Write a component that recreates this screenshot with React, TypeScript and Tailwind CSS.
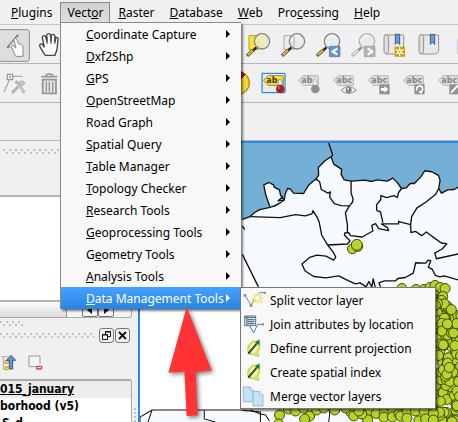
import React from "react";

/* Renders a label with its mnemonic letter (marked by "&") underlined. */
function Mnemonic({ text }: { text: string }) {
  const i = text.indexOf("&");
  if (i < 0) return <span>{text}</span>;
  return (
    <span>
      {text.slice(0, i)}
      <span className="underline decoration-1 underline-offset-1">{text[i + 1]}</span>
      {text.slice(i + 2)}
    </span>
  );
}

const MENUS = ["&Plugins", "Vect&or", "&Raster", "&Database", "&Web", "Pro&cessing", "&Help"];

function MenuBar() {
  return (
    <nav className="flex h-[25px] shrink-0 items-start gap-px border-b border-[#c4c4c4] bg-[#f0f0f0] pt-[2px] pl-[4px]" aria-label="Main menu">
      {MENUS.map((m) => (
        <button
          key={m}
          type="button"
          className={
            m === "Vect&or"
              ? "flex h-[21px] items-center whitespace-nowrap border border-[#8a8a8a] bg-linear-to-b from-[#d2d2d2] to-[#dedede] px-[6px]"
              : "flex h-[21px] items-center whitespace-nowrap border border-transparent px-[6px]"
          }
        >
          <Mnemonic text={m} />
        </button>
      ))}
    </nav>
  );
}

function ToolButton({ label, viewBox, className = "", children }: { label: string; viewBox: string; className?: string; children: React.ReactNode }) {
  return (
    <button type="button" aria-label={label} className={`size-[35px] shrink-0 ${className}`}>
      <svg viewBox={viewBox} className="size-full overflow-visible" fill="none">
        {children}
      </svg>
    </button>
  );
}

function Magnifier({ handle = "#f0b030", dim = false }: { handle?: string; dim?: boolean }) {
  return (
    <g>
      <path d="M26 164 L45 147" stroke={dim ? "#a8a8a8" : "#4c4c4c"} strokeWidth="10" />
      <path d="M28 162 L45 147" stroke={handle} strokeWidth="6" />
      <path d="M45 148 L54 139" stroke={dim ? "#909090" : "#222"} strokeWidth="7" />
      <circle cx="71" cy="121" r="23" fill="#e8e8e8" fillOpacity=".7" stroke={dim ? "#b4b4b4" : "#858585"} strokeWidth="4" />
      <path d="M54 120 Q58 103 75 104" stroke="#fff" strokeWidth="3" />
    </g>
  );
}

function Scroll() {
  return (
    <g>
      <path d="M22 102 h54 v49 q-5 8-10 8 H24 z" fill="#e9e9e9" stroke="#929292" strokeWidth="3" />
      <path d="M20 101 q-4 5-3 14 v37 q2 9 9 6 q6-3 5-10 V110 q-1-10-11-9z" fill="#ddd" stroke="#929292" strokeWidth="3" />
      <path d="M51 100 h13 v30 l-7-6-6 6z" fill="#719cca" stroke="#315f91" strokeWidth="3" />
    </g>
  );
}

function Tag({ text, active = false }: { text: string; active?: boolean }) {
  return (
    <g>
      <path d="M5 241 L20 227 H62 Q65 227 65 230 V256 H20z" fill={active ? "#f7df3c" : "#dedede"} stroke={active ? "#a28b2b" : "#b6b6b6"} strokeWidth="3" />
      <text x="14" y="249" className="font-['DejaVu_Sans',sans-serif] font-bold" fontSize="24" fill={active ? "#3d3927" : "#868686"}>
        {text}
      </text>
    </g>
  );
}

function NavigationBar() {
  return (
    <div className="flex h-[39px] shrink-0 items-center overflow-hidden border-b border-[#b5b5b5]" role="toolbar" aria-label="Map navigation">
      <ToolButton label="Touch zoom and pan" viewBox="-12 78 105 105" className="-ml-[4px]">
        <rect x="-9" y="86" width="97" height="95" rx="7" fill="#dedede" stroke="#8c8c8c" strokeWidth="3" />
        <path d="M22 139 L54 101 M20 139 l9-1 M53 109 v-9" stroke="#777" strokeWidth="4" />
        <path d="M37 144 Q31 134 39 133 L48 141 L42 117 Q42 109 49 113 L56 129 Q66 127 69 139 L69 166 H47z" fill="#fff" stroke="#8a8a8a" strokeWidth="3" />
      </ToolButton>
      <ToolButton label="Pan map" viewBox="93 78 105 105">
        <path d="M130 155 L119 135 Q119 126 127 130 L133 139 L127 110 Q128 101 136 105 L141 122 L140 102 Q145 94 151 101 L153 120 L154 102 Q161 97 165 105 V123 L168 109 Q175 108 174 116 L171 145 L165 163 H136z" fill="#fff" stroke="#444" strokeWidth="4" />
        <path d="M141 108 V128 M153 105 V128 M164 108 V128" stroke="#555" strokeWidth="4" />
      </ToolButton>
      <div className="w-[175px] shrink-0" />
      <ToolButton label="Zoom to selection" viewBox="8 78 105 105">
        <path d="M32 104 H62 V145 H32z" fill="#f8e33c" stroke="#b5a01c" strokeWidth="3" />
        <Magnifier />
        <circle cx="71" cy="121" r="19" fill="#eee9a6" fillOpacity=".7" />
      </ToolButton>
      <ToolButton label="Zoom to layer" viewBox="8 78 105 105">
        <path d="M32 104 H62 V145 H32z" fill="#ececec" stroke="#a9a9a9" strokeWidth="3" />
        <Magnifier />
        <path d="M62 104 v36" stroke="#b5b5b5" strokeWidth="3" />
      </ToolButton>
      <ToolButton label="Zoom last" viewBox="8 78 105 105">
        <Magnifier />
        <path d="M63 136 H95 V167 H63z" fill="#6796c4" stroke="#3e72a7" strokeWidth="2" />
        <path d="M87 142 L73 152 L87 161" stroke="#fff" strokeWidth="6" />
      </ToolButton>
      <ToolButton label="Zoom next" viewBox="8 78 105 105">
        <Magnifier handle="#e4e4e4" dim />
        <path d="M63 136 H95 V167 H63z" fill="#b4b4b4" stroke="#999" strokeWidth="2" />
        <path d="M73 142 L87 152 L73 161" stroke="#fff" strokeWidth="6" />
      </ToolButton>
      <ToolButton label="New bookmark" viewBox="8 78 105 105">
        <Scroll />
        <path d="M49 137 H80 V167 H49z" fill="#c9a000" />
        <path d="M64 139 V165 M53 145 L76 159 M76 145 L53 159" stroke="#fff" strokeWidth="4" />
        <circle cx="64" cy="152" r="6" fill="#fff" />
        <circle cx="64" cy="152" r="3" fill="#c9a000" />
      </ToolButton>
      <ToolButton label="Show bookmarks" viewBox="8 78 105 105">
        <Scroll />
      </ToolButton>
      <ToolButton label="Refresh" viewBox="8 78 105 105">
        <path d="M25 118 q12-12 30 0 v42 H25z" fill="#cdd3e6" />
      </ToolButton>
    </div>
  );
}

function LabelBar() {
  return (
    <div className="flex h-[39px] shrink-0 items-center overflow-hidden border-b border-[#b5b5b5]" role="toolbar" aria-label="Labels">
      <ToolButton label="Node tool" viewBox="-12 198 105 105" className="-ml-[4px]">
        <path d="M68 229 H38 M28 240 L12 276" stroke="#aaa" strokeWidth="4" />
        <path d="M22 223 h16 v16 H22z" stroke="#999" strokeWidth="4" />
        <circle cx="30" cy="231" r="3" fill="#999" />
        <path d="M36 279 L60 254 M47 243 L73 278" stroke="#b5b5b5" strokeWidth="9" />
        <path d="M55 247 Q69 238 75 250 L61 261z" fill="#c5c5c5" stroke="#aaa" strokeWidth="3" />
        <path d="M50 250 L68 274" stroke="#e5e5e5" strokeWidth="3" />
      </ToolButton>
      <ToolButton label="Delete selected" viewBox="93 198 105 105">
        <path d="M124 230 H172 M137 226 Q148 217 160 226" stroke="#979797" strokeWidth="5" />
        <path d="M128 239 H168 V280 H128z" fill="#e4e4e4" stroke="#929292" strokeWidth="5" />
        <path d="M139 245 V275 M148 245 V275 M158 245 V275" stroke="#929292" strokeWidth="4" />
      </ToolButton>
      <div className="w-[155px] shrink-0" />
      <ToolButton label="Diagram options" viewBox="-52 198 105 105">
        <circle cx="0" cy="249" r="33" fill="#f3d936" stroke="#b5920d" strokeWidth="4" />
        <path d="M0 249 L24 224 L8 213z" fill="#b81313" />
        <path d="M0 249 L24 224" stroke="#fff4a0" strokeWidth="3" />
      </ToolButton>
      <ToolButton label="Layer labeling options" viewBox="-17 198 105 105">
        <path d="M1 220 H70 V278 H1z" fill="#e8e8e8" stroke="#0870e8" strokeWidth="3" />
        <Tag text="ab" active />
        <path d="M49 246 q0-8 6-8 q6 1 6 9 v10 h-12z" fill="#eee" stroke="#777" strokeWidth="2" />
        <circle cx="56" cy="267" r="13" fill="#a91f1f" />
        <circle cx="52" cy="263" r="4" fill="#cf5a5a" />
      </ToolButton>
      <ToolButton label="Pin labels" viewBox="-17 198 105 105">
        <Tag text="ab" />
        <path d="M49 246 q0-8 6-8 q6 1 6 9 v10 h-12z" fill="#eee" stroke="#aaa" strokeWidth="2" />
        <circle cx="56" cy="267" r="13" fill="#8f8f8f" />
      </ToolButton>
      <ToolButton label="Show and hide labels" viewBox="-17 198 105 105">
        <Tag text="abc" />
        <path d="M28 271 Q51 248 74 271 Q51 290 28 271z" fill="#eee" stroke="#8d8d8d" strokeWidth="3" />
        <circle cx="51" cy="270" r="9" fill="#818181" />
        <circle cx="49" cy="267" r="3" fill="#eee" />
      </ToolButton>
      <ToolButton label="Move label" viewBox="-17 198 105 105">
        <Tag text="abc" />
        <path d="M38 253 H69 V283 H38z" fill="#929292" />
        <path d="M43 264 H53 V258 L65 268 L53 278 V272 H43z" fill="#fff" />
      </ToolButton>
      <ToolButton label="Rotate label" viewBox="-17 198 105 105">
        <Tag text="abc" />
        <path d="M38 253 H69 V283 H38z" fill="#929292" />
        <path d="M46 271 A9 9 0 1 1 58 275" stroke="#fff" strokeWidth="5" />
        <path d="M49 276 l12-6 v11z" fill="#fff" />
      </ToolButton>
      <ToolButton label="Change label" viewBox="-17 198 105 105">
        <Tag text="abc" />
        <path d="M38 253 H69 V283 H38z" fill="#929292" />
        <path d="M43 278 L64 256" stroke="#fff" strokeWidth="6" />
      </ToolButton>
    </div>
  );
}

/* Staggered two-row grip used on dock title bars. */
function Grip({ className }: { className: string }) {
  return (
    <div
      className={`h-[5px] bg-[radial-gradient(circle_at_1px_1px,#c2c2c2_1px,transparent_1px),radial-gradient(circle_at_4px_4px,#c2c2c2_1px,transparent_1px)] bg-size-[6px_5px] ${className}`}
    />
  );
}

function Docks() {
  return (
    <aside className="flex w-[138px] shrink-0 flex-col overflow-hidden bg-[#f0f0f0]">
      <div className="flex h-[54px] shrink-0 items-start pt-[8px]">
        <Grip className="ml-[3px] flex-1" />
      </div>
      <div className="h-[107px] shrink-0 border-y-2 border-[#b4b4b4] bg-white" />
      <div className="mr-[6px] flex h-[16px] shrink-0 justify-between rounded-br-[3px] border-r border-b border-[#aaa] bg-[#f4f4f4]">
        <div className="w-[67px] border-r border-[#999] bg-linear-to-b from-[#fafafa] to-[#dcdcdc]" />
        <div className="flex pr-[17px]">
          <button type="button" aria-label="Scroll left" className="flex w-[16px] items-center justify-center rounded-[2px] border border-[#777]">
            <svg viewBox="0 0 8 8" className="size-[8px]"><path d="M6 0v8L1 4z" fill="#111" /></svg>
          </button>
          <button type="button" aria-label="Scroll right" className="flex w-[16px] items-center justify-center rounded-[2px] border border-[#777]">
            <svg viewBox="0 0 8 8" className="size-[8px]"><path d="M2 0v8l5-4z" fill="#111" /></svg>
          </button>
        </div>
      </div>
      <Grip className="mt-[3px] w-[24px] shrink-0" />
      <div className="mt-[1px] flex h-[17px] shrink-0 items-center gap-[1px] pr-[8px]">
        <Grip className="mr-[4px] flex-1" />
        <button type="button" aria-label="Float panel" className="size-[15px] rounded-[3px] border border-[#777] bg-[#f2f2f2]">
          <svg viewBox="0 0 13 13" className="size-full" fill="#f2f2f2" stroke="#111">
            <path d="M5.500 2.500h5v5h-5z M5 3h6" />
            <path d="M2.500 5.500h5v5h-5z M2 6h6" />
          </svg>
        </button>
        <button type="button" aria-label="Close panel" className="size-[15px] rounded-[3px] border border-[#777] bg-[#f2f2f2]">
          <svg viewBox="0 0 13 13" className="size-full"><path d="M3 3l7 7M10 3l-7 7" stroke="#111" strokeWidth="1.800" /></svg>
        </button>
      </div>
      <div className="flex h-[35px] shrink-0 items-center gap-[10px] pt-[2px]">
        <button type="button" aria-label="Expand all" className="size-[18px]">
          <svg viewBox="0 0 54 54" className="size-full" fill="none">
            <path d="M3 8H25M10 8V45H17M10 25H17" stroke="#aaa" strokeWidth="3" />
            <path d="M16 20h8v8h-8zM16 39h8v8h-8z" fill="#fff" stroke="#f0a000" strokeWidth="4" />
            <path d="M33 4 L47 19H38V45H28V19H19z" fill="#6695c9" stroke="#315d8f" strokeWidth="3" />
          </svg>
        </button>
        <button type="button" aria-label="Remove layer" className="size-[18px]">
          <svg viewBox="0 0 54 54" className="size-full" fill="none">
            <path d="M3 6H36V38H3z" fill="#f4f4f4" stroke="#999" strokeWidth="3" />
            <circle cx="34" cy="40" r="11" fill="#f0f0f0" />
            <rect x="24" y="35" width="19" height="12" rx="4" fill="#e34848" />
            <path d="M28 41h11" stroke="#fff" strokeWidth="3" />
          </svg>
        </button>
      </div>
      <div className="flex min-h-0 flex-1">
        <ul className="w-[132px] rounded-tr-[3px] border-t-2 border-r border-[#aaa] bg-white font-['DejaVu_Sans_Condensed','DejaVu_Sans',sans-serif] leading-[17px] font-bold whitespace-nowrap">
          <li className="bg-[#ececec] underline">015_january</li>
          <li>borhood (v5)</li>
          <li className="pl-[2px]">S_d</li>
        </ul>
        <div className="mt-[29px] ml-[2px] w-[3px] bg-[radial-gradient(circle_at_1px_1px,#c2c2c2_1px,transparent_1px)] bg-size-[3px_4px]" />
      </div>
    </aside>
  );
}

/* Sample points along the eastern strip and the southern row, in map pixels. */
const POINTS: [number, number][] = (() => {
  const pts: [number, number][] = [
    [401, 289], [415, 290], [423, 290], [429, 288], [434, 286], [439, 288], [444, 289],
  ];
  let seed = 17;
  const rnd = () => {
    seed = (seed * 1103515245 + 12345) % 2147483648;
    return seed / 2147483648;
  };
  for (let i = 0; i < 190; i++) {
    const x = 434 + rnd() * 26;
    const y = 292 + rnd() * 132;
    const right = y < 304 ? 443 : y < 316 ? 445 + (y - 304) : 462;
    if (x > right || (Math.abs(x - 449) < 5 && Math.abs(y - 353) < 5)) continue;
    pts.push([x, y]);
  }
  for (let x = 366; x < 436; x += 8) {
    pts.push([x + rnd() * 3, 409 + rnd() * 5]);
    if (rnd() > 0.2) pts.push([x + rnd() * 4, 416 + rnd() * 5]);
  }
  return pts.concat([
    [279, 415], [278, 424], [288, 409], [295, 411], [303, 408], [309, 416], [304, 419], [316, 410], [323, 408], [334, 410], [350, 412], [353, 416], [361, 414], [358, 411], [345, 408],
  ]);
})();

function MapCanvas() {
  return (
    <main className="relative min-w-0 flex-1 overflow-hidden border-t-2 border-l-2 border-[#2888e8] bg-white">
      <svg viewBox="140 144 318 278" preserveAspectRatio="xMinYMin slice" className="size-full" role="img" aria-label="Neighborhood map">
        <g transform="translate(238 100) scale(.33333)" stroke="#101010" strokeWidth="4" strokeLinejoin="round" fill="none">
          <path d="M-10 130H670V300L12 362H-10z" fill="#74b0d6" stroke="none" />
          <path d="M12 360L35 352L50 339L64 331L88 326L110 320L137 303L140 285L147 268L155 269L165 282L195 283L210 258L222 247L232 240L240 228L239 205L258 186L277 173L285 195L309 211L307 225L316 242L338 246L378 243L400 247L414 242L445 246L462 237L474 249L488 268L502 266L514 253L526 253L545 234L557 215L578 218L598 229L603 243L599 268L607 282L626 272L645 271L660 262L700 262V990H100L60 562L12 465z" fill="#f7faff" stroke="none" />
          <path d="M12 360L35 352L50 339L64 331L88 326L110 320L137 303L140 285L147 268L155 269L165 282L195 283L210 258L222 247L232 240L240 228L239 205L258 186L277 173L285 195L309 211L307 225L316 242L338 246L378 243L400 247L414 242L445 246L462 237L474 249L488 268L502 266L514 253L526 253L545 234L557 215L578 218L598 229L603 243L599 268L607 282L626 272L645 271L660 262" />
          <path d="M12 465L60 562M12 380l7 11M270 132L282 168L277 173M35 352L125 355L171 346L200 350L220 344L223 334L236 355L242 370L249 407L267 437L284 459L291 473L285 482L262 470L235 467L213 474L190 494L199 514L225 531L262 535L300 529L330 544L350 553L364 550L382 562M267 437L326 434L334 425L317 407L318 401L330 400L335 409L370 413L402 395L399 378L410 373L420 388L449 394L446 385L428 374L479 374V366L488 369L515 376L516 400L529 396L548 409L562 398L579 411L607 431L623 433L610 448L587 461L592 478L660 463" />
          <path d="M232 240L243 248L248 271L268 282L275 278L273 294L287 313L307 319L332 320L341 309L343 300L337 281V246M332 320L320 341L326 376V401M488 268L479 280L475 295L465 289L443 295L426 289V301L413 317L414 334L425 338L432 370M599 268L590 285L560 309L534 326L518 352L515 376" />
          <path d="M94 322L82 287L76 257L92 250L106 258L107 264L123 272L126 288L137 303M137 303L119 305L134 292" fill="#f7faff" />
          <path d="M382 562L390 546L399 562L403 538L409 562M425 562L420 550L437 544H470L477 537L499 534L523 521L530 490L560 491L567 482L575 484L568 503L580 510L589 528L602 532L615 529L660 542" />
        </g>
        <g stroke="#111" fill="none">
          <path d="M140 417L152 410H240L260 412V430H140z" fill="#f7faff" />
          <path d="M152 410L148 422M204 410V419L215 422M250 410L260 414L265 415L269 421M328 408l1 6-1 8" />
        </g>
        <g fill="#b8d32b" stroke="#323c00" strokeWidth=".9">
          <circle cx="351.500" cy="249.500" r="4.800" />
          <circle cx="357" cy="247" r="5" />
          <circle cx="356" cy="245.500" r="5.500" />
          {POINTS.map(([x, y], i) => (
            <circle key={i} cx={x} cy={y} r="5" />
          ))}
        </g>
      </svg>
    </main>
  );
}

const VECTOR_ITEMS = [
  "&Coordinate Capture", "&Dxf2Shp", "&GPS", "&OpenStreetMap", "Road Graph", "&Spatial Query", "&Table Manager",
  "&Topology Checker", "&Research Tools", "&Geoprocessing Tools", "G&eometry Tools", "&Analysis Tools", "&Data Management Tools",
];

function VectorMenu() {
  return (
    <div role="menu" aria-label="Vector" className="absolute top-[22px] left-[60px] w-[181px] border-t border-[#8a8a8a] bg-[#f8f8f8] shadow-[2px_2px_2px_rgba(0,0,0,0.5)]">
      {VECTOR_ITEMS.map((t, i) => (
        <button
          key={t}
          type="button"
          role="menuitem"
          aria-haspopup="menu"
          className={
            i === VECTOR_ITEMS.length - 1
              ? "flex h-[22px] w-full items-center justify-between border-l border-[#8a8a8a] bg-linear-to-b from-[#45a2ff] to-[#2884df] pt-[2px] pr-[11px] pl-[25px] whitespace-nowrap text-white"
              : "flex h-[22px] w-full items-center justify-between border-l border-[#8a8a8a] pt-[2px] pr-[11px] pl-[25px] whitespace-nowrap"
          }
        >
          <Mnemonic text={t} />
          <svg viewBox="0 0 4 8" className="mb-[2px] h-[8px] w-[4px] shrink-0"><path d="M0 0L4 4L0 8z" fill="currentColor" /></svg>
        </button>
      ))}
    </div>
  );
}

function SplitIcon() {
  return (
    <g fill="none">
      <path d="M6 13L24 43L34 24L49 5H65" stroke="#748da0" strokeWidth="3" />
      <path d="M2 9h8v8H2zM20 40h8v8h-8zM62 2h7v7h-7z" fill="#8299a9" />
      <path d="M44 22m0-16v32M28 22h32M32 10l25 25M57 10L31 36" stroke="#f2e467" strokeWidth="5" />
      <circle cx="44" cy="22" r="7" fill="#fbfae6" />
    </g>
  );
}

function JoinIcon() {
  return (
    <g fill="none" stroke="#60798d" strokeWidth="3">
      <path d="M5 3H38V32H5z" fill="#dce7ee" />
      <path d="M5 7H38M12 3V32M15 14H34M15 20H34M15 26H34" strokeWidth="4" />
      <path d="M20 33L32 54L44 28H62M60 24v8" />
    </g>
  );
}

function ProjectionIcon() {
  return (
    <g>
      <path d="M19 15Q33-1 47 12Q55 25 43 42L49 51H37L33 46Q17 51 14 35Q13 24 19 15z" fill="#dcea60" stroke="#aaba37" strokeWidth="2" />
      <ellipse cx="32" cy="27" rx="10" ry="15" fill="#f7faca" transform="rotate(18 32 27)" />
      <path d="M16 44L46 8" stroke="#173f18" strokeWidth="6" />
      <path d="M49 1L51 19L37 9z" fill="#258525" />
      <path d="M19 40L45 10" stroke="#36933a" strokeWidth="2" />
    </g>
  );
}

function MergeIcon() {
  return (
    <g fill="#c5e3f5" stroke="#7fa2bb" strokeWidth="2">
      <path d="M1 0H22L31 10V44H1z" />
      <path d="M22 0V10H31" fill="#f6fbff" />
      <path d="M30 13H50L60 23V57H30z" />
      <path d="M50 13V23H60" fill="#f6fbff" />
    </g>
  );
}

const SUB_ITEMS: [string, () => React.ReactElement][] = [
  ["Split vector layer", SplitIcon],
  ["Join attributes by location", JoinIcon],
  ["Define current projection", ProjectionIcon],
  ["Create spatial index", ProjectionIcon],
  ["Merge vector layers", MergeIcon],
];

function DataManagementMenu() {
  return (
    <div role="menu" aria-label="Data Management Tools" className="absolute top-[287px] left-[240px] w-[196px] border border-[#777] bg-[#f8f8f8] shadow-[2px_2px_2px_rgba(0,0,0,0.5)]">
      {SUB_ITEMS.map(([t, Icon]) => (
        <button key={t} type="button" role="menuitem" className="flex h-[24px] w-full items-center gap-[7px] pt-[2px] pl-[2px] whitespace-nowrap">
          <svg viewBox="0 0 60 60" className="size-[20px] shrink-0 overflow-visible"><Icon /></svg>
          <span>{t}</span>
        </button>
      ))}
    </div>
  );
}

export default function App() {
  return (
    <div className="relative flex h-screen w-full flex-col overflow-hidden bg-[#f0f0f0] font-['Noto_Sans',Tahoma,sans-serif] text-[12px] leading-[16px] text-black">
      <MenuBar />
      <NavigationBar />
      <LabelBar />
      <div className="h-[38px] shrink-0 border-b border-[#b5b5b5]" />
      <div className="flex min-h-0 flex-1">
        <Docks />
        <MapCanvas />
      </div>
      <VectorMenu />
      <DataManagementMenu />
      <svg viewBox="0 0 138 340" className="pointer-events-none absolute top-[307px] left-[167px] h-[113px] w-[46px] overflow-visible drop-shadow-[2px_2px_2px_rgba(0,0,0,0.5)]" aria-hidden="true">
        <path d="M59 0L134 191L86 196L92 326L59 328L52 194L4 198z" fill="#ff3333" />
      </svg>
    </div>
  );
}
